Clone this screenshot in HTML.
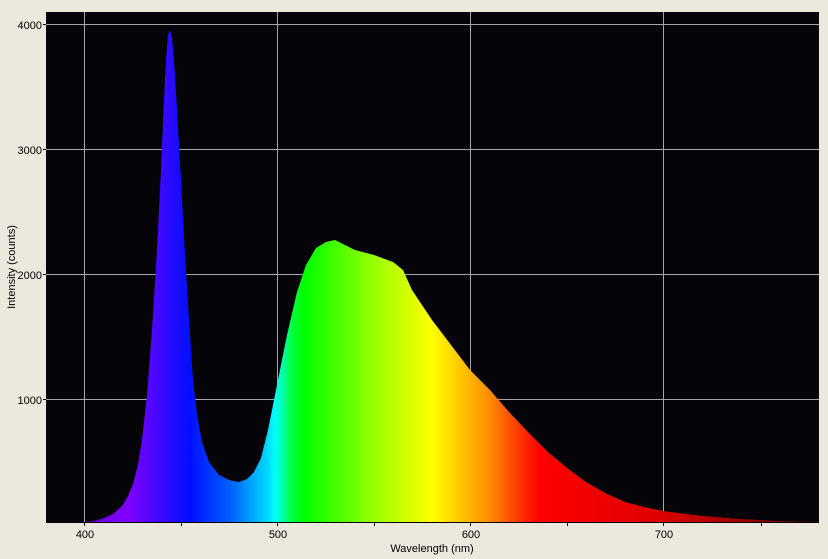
<!DOCTYPE html><html><head><style>body{margin:0;background:#ebe8dd;}svg{display:block}</style></head><body>
<svg width="828" height="559" xmlns="http://www.w3.org/2000/svg" font-family="Liberation Sans, sans-serif" font-size="11">
<defs><linearGradient id="g" gradientUnits="userSpaceOnUse" x1="84" y1="0" x2="818" y2="0">
<stop offset="0" stop-color="#6a00d0"/>
<stop offset="0.06" stop-color="#8000ff"/>
<stop offset="0.145" stop-color="#0010ff"/>
<stop offset="0.2" stop-color="#0060ff"/>
<stop offset="0.25" stop-color="#00d8ff"/>
<stop offset="0.26" stop-color="#00ffff"/>
<stop offset="0.283" stop-color="#00ff40"/>
<stop offset="0.3" stop-color="#00ff00"/>
<stop offset="0.4" stop-color="#a0ff00"/>
<stop offset="0.475" stop-color="#ffff00"/>
<stop offset="0.55" stop-color="#ff9000"/>
<stop offset="0.62" stop-color="#ff0000"/>
<stop offset="0.78" stop-color="#e00000"/>
<stop offset="1" stop-color="#600000"/>
</linearGradient></defs>
<rect x="46" y="12" width="773" height="510" fill="#050408"/>
<g stroke="#a8a8a8" stroke-width="1">
<line x1="84.5" y1="12" x2="84.5" y2="522"/><line x1="277.5" y1="12" x2="277.5" y2="522"/><line x1="470.5" y1="12" x2="470.5" y2="522"/><line x1="663.5" y1="12" x2="663.5" y2="522"/>
<line x1="46" y1="24.5" x2="819" y2="24.5"/><line x1="46" y1="149.5" x2="819" y2="149.5"/><line x1="46" y1="274.5" x2="819" y2="274.5"/><line x1="46" y1="399.5" x2="819" y2="399.5"/>
</g>
<path fill="url(#g)" d="M84,522 L94,521 L104,518 L113,514 L122,506 L128,496 L133,484 L138,465 L142,440 L147,395 L152,330 L157,250 L161,170 L164,100 L166,60 L168,35 L170,30 L172,38 L174,60 L177,110 L181,180 L185,255 L189,320 L193,380 L197,415 L202,442 L209,462 L219,475 L229,480 L239,482 L247,479 L254,472 L261,458 L268,430 L277,385 L287,335 L297,292 L306,265 L316,248 L326,242 L335,240 L345,245 L355,250 L374,255 L393,262 L403,270 L412,290 L432,320 L451,345 L470,370 L490,390 L509,412 L528,432 L548,452 L567,468 L586,482 L605,493 L625,502 L644,507 L663,511 L702,516 L741,519 L779,521 L818,522 Z"/>
<g stroke="#000" stroke-width="1">
<line x1="46" y1="522.5" x2="819" y2="522.5"/>
<line x1="43" y1="24.5" x2="46" y2="24.5"/><line x1="43" y1="149.5" x2="46" y2="149.5"/><line x1="43" y1="274.5" x2="46" y2="274.5"/><line x1="43" y1="399.5" x2="46" y2="399.5"/>
<line x1="84.5" y1="522" x2="84.5" y2="526"/><line x1="181.5" y1="522" x2="181.5" y2="526"/><line x1="277.5" y1="522" x2="277.5" y2="526"/><line x1="374.5" y1="522" x2="374.5" y2="526"/><line x1="470.5" y1="522" x2="470.5" y2="526"/><line x1="567.5" y1="522" x2="567.5" y2="526"/><line x1="663.5" y1="522" x2="663.5" y2="526"/><line x1="761.5" y1="522" x2="761.5" y2="526"/>
</g>
<g fill="#000" text-anchor="end">
<text x="42" y="29">4000</text><text x="42" y="154">3000</text><text x="42" y="279">2000</text><text x="42" y="404">1000</text>
</g>
<g fill="#000" text-anchor="middle">
<text x="85" y="538">400</text><text x="278" y="538">500</text><text x="471" y="538">600</text><text x="664" y="538">700</text>
<text x="432" y="552">Wavelength (nm)</text>
<text transform="translate(15,267) rotate(-90)">Intensity (counts)</text>
</g>
</svg></body></html>
